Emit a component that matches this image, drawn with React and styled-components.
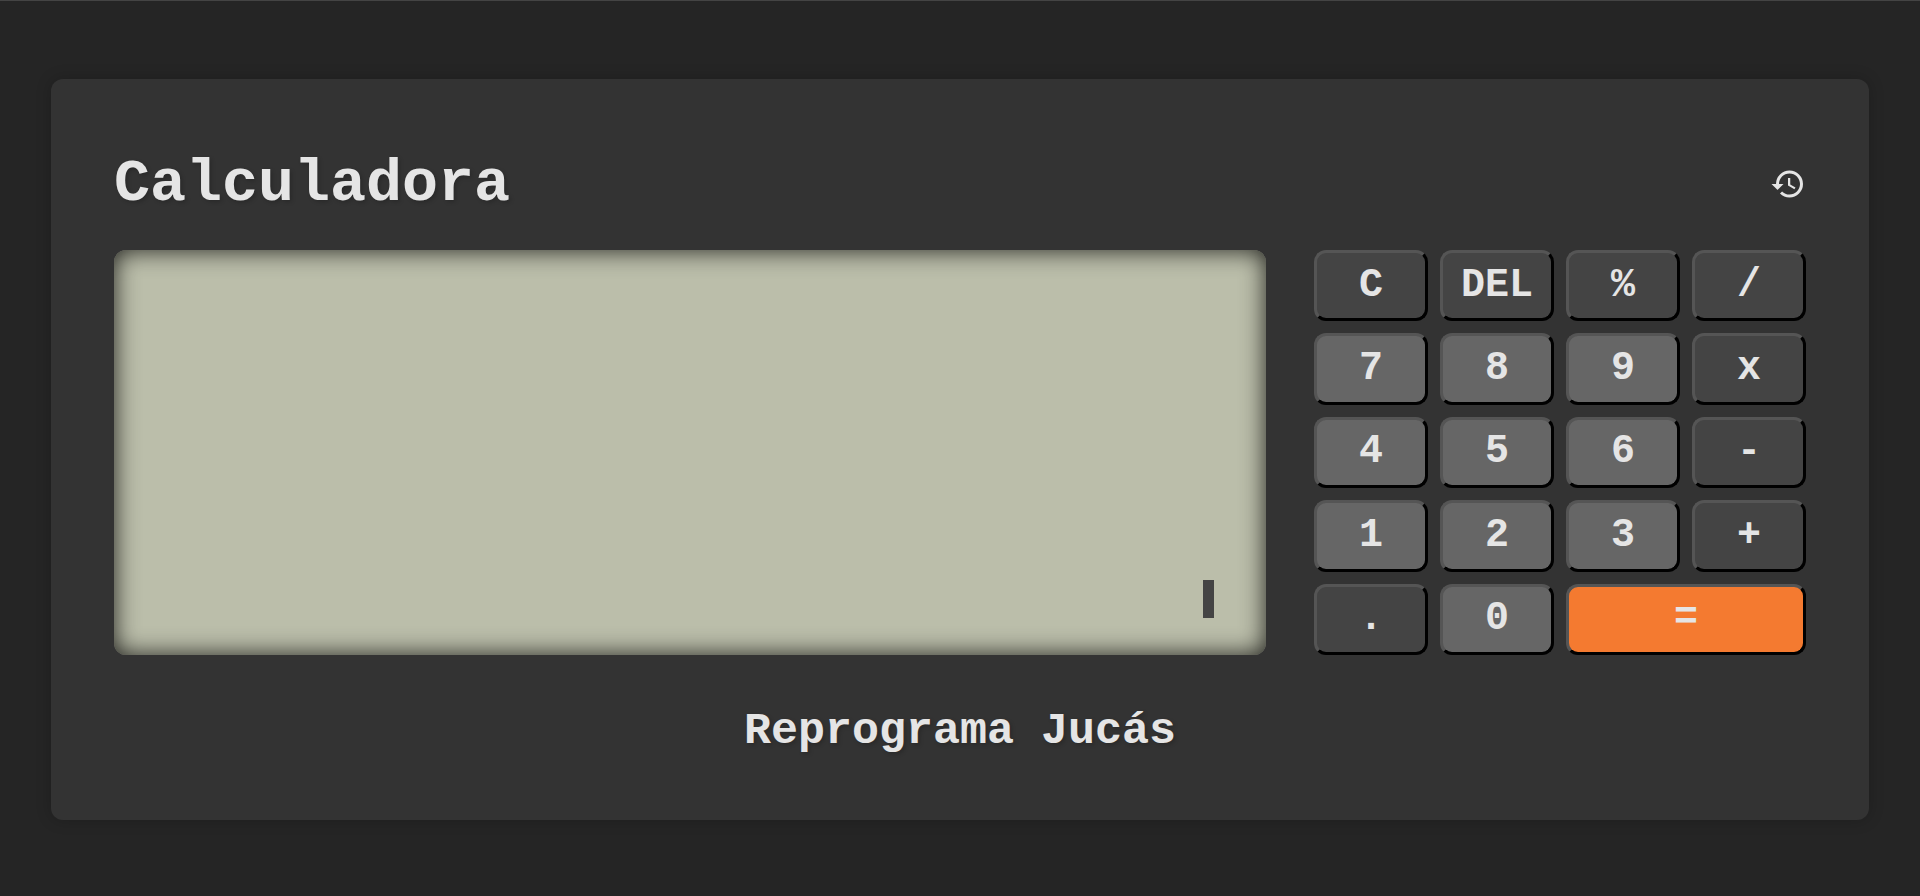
import React, { useState } from "react";
import styled, { createGlobalStyle } from "styled-components";
import { MdHistory } from "react-icons/md";

const GlobalStyle = createGlobalStyle`
  *, *::before, *::after { box-sizing: border-box; }
  body {
    margin: 0;
    background: #252525;
    color: #e5e5e5;
    font-family: "Liberation Mono", monospace;
    font-weight: 700;
  }
`;

const Page = styled.div`
  min-height: 100vh;
  display: flex;
  align-items: center;
  padding: 50px 51px 48px;
  border-top: 1px solid #444;
`;

const Card = styled.main`
  flex: 1;
  display: flex;
  flex-direction: column;
  padding: 63px;
  background: #333;
  border-radius: 12px;
  box-shadow: 0 0 16px rgba(0, 0, 0, 0.2);
`;

const Header = styled.header`
  display: flex;
  align-items: center;
  justify-content: space-between;
  height: 84px;
  margin-bottom: 24px;
`;

const Title = styled.h1`
  margin: 0;
  font-size: 60px;
  line-height: 72px;
  text-shadow: 2px 2px 4px rgba(0, 0, 0, 0.2);
`;

const HistoryButton = styled.button`
  display: flex;
  padding: 0;
  border: 0;
  background: none;
  color: #e5e5e5;
  font-size: 36px;
  cursor: pointer;
`;

const Body = styled.div`
  display: flex;
  gap: 48px;
  min-height: 405px;
`;

const Screen = styled.output`
  flex: 1;
  min-width: 0;
  display: flex;
  align-items: flex-end;
  justify-content: flex-end;
  padding: 37px 52px;
  border-radius: 12px;
  background: #bbbeaa;
  box-shadow: inset 0 0 24px rgba(0, 0, 0, 0.85);
  color: #444;
  font-size: 40px;
  line-height: 38px;
`;

const Cursor = styled.span`
  width: 11px;
  height: 38px;
  background: #444;
`;

const Keypad = styled.div`
  display: grid;
  grid-template-columns: repeat(4, 114px);
  grid-auto-rows: 1fr;
  gap: 12px;
`;

const keyColors = { digit: "#666", action: "#444", equals: "#f47a30" };

const Key = styled.button`
  grid-column: span ${(p) => (p.$kind === "equals" ? 2 : 1)};
  padding: 0;
  border: 3px solid;
  border-color: #555 #000 #000 #555;
  border-radius: 12px;
  background: ${(p) => keyColors[p.$kind]};
  color: #e5e5e5;
  font: 700 40px/48px "Liberation Mono", monospace;
  cursor: pointer;
`;

const Footer = styled.footer`
  padding-top: 50px;
  margin-bottom: -2px;
  font-size: 45px;
  line-height: 54px;
  text-align: center;
  text-shadow: 2px 2px 4px rgba(0, 0, 0, 0.2);
`;

const keys = [
  "C", "DEL", "%", "/",
  "7", "8", "9", "x",
  "4", "5", "6", "-",
  "1", "2", "3", "+",
  ".", "0", "=",
];

const kindOf = (key) =>
  key === "=" ? "equals" : /^\d$/.test(key) ? "digit" : "action";

const compute = (text) => {
  const parts = text.match(/\d*\.?\d+|[-+x/%]/g) || [];
  let total = Number(parts[0] || 0);
  for (let i = 1; i + 1 < parts.length; i += 2) {
    const n = Number(parts[i + 1]);
    if (parts[i] === "+") total += n;
    if (parts[i] === "-") total -= n;
    if (parts[i] === "x") total *= n;
    if (parts[i] === "/") total /= n;
    if (parts[i] === "%") total %= n;
  }
  return String(total);
};

export default function App() {
  const [entry, setEntry] = useState("");

  const press = (key) => {
    if (key === "C") setEntry("");
    else if (key === "DEL") setEntry(entry.slice(0, -1));
    else if (key === "=") setEntry(entry && compute(entry));
    else setEntry(entry + key);
  };

  return (
    <>
      <GlobalStyle />
      <Page>
        <Card>
          <Header>
            <Title>Calculadora</Title>
            <HistoryButton type="button" aria-label="Histórico">
              <MdHistory />
            </HistoryButton>
          </Header>
          <Body>
            <Screen aria-label="Visor">
              {entry}
              <Cursor />
            </Screen>
            <Keypad>
              {keys.map((key) => (
                <Key
                  key={key}
                  type="button"
                  $kind={kindOf(key)}
                  onClick={() => press(key)}
                >
                  {key}
                </Key>
              ))}
            </Keypad>
          </Body>
          <Footer>Reprograma Jucás</Footer>
        </Card>
      </Page>
    </>
  );
}
